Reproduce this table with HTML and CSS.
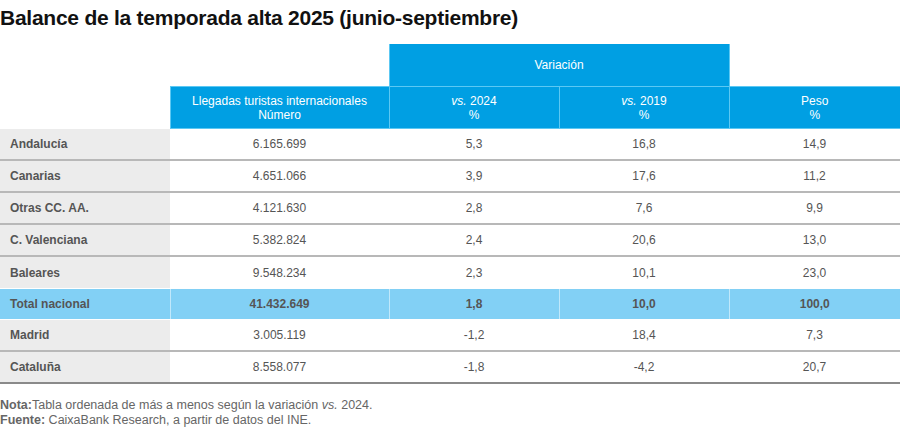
FILE: index.html
```html
<!DOCTYPE html>
<html lang="es">
<head>
<meta charset="utf-8">
<link rel="stylesheet" href="styles.css">
</head>
<body>
<h1 class="title">Balance de la temporada alta 2025 (junio-septiembre)</h1>
<table class="tbl">
  <colgroup>
    <col class="c-label"><col class="c-num"><col class="c-var"><col class="c-var"><col class="c-peso">
  </colgroup>
  <thead>
    <tr class="h1">
      <th></th><th></th><th colspan="2" class="blue">Variación</th><th></th>
    </tr>
    <tr class="h2">
      <th></th>
      <th class="blue">Llegadas turistas internacionales<br>Número</th>
      <th class="blue"><i>vs.</i> 2024<br>%</th>
      <th class="blue"><i>vs.</i> 2019<br>%</th>
      <th class="blue">Peso<br>%</th>
    </tr>
  </thead>
  <tbody>
    <tr><td class="lab">Andalucía</td><td>6.165.699</td><td>5,3</td><td>16,8</td><td>14,9</td></tr>
    <tr><td class="lab">Canarias</td><td>4.651.066</td><td>3,9</td><td>17,6</td><td>11,2</td></tr>
    <tr><td class="lab">Otras CC. AA.</td><td>4.121.630</td><td>2,8</td><td>7,6</td><td>9,9</td></tr>
    <tr><td class="lab">C. Valenciana</td><td>5.382.824</td><td>2,4</td><td>20,6</td><td>13,0</td></tr>
    <tr class="pre"><td class="lab">Baleares</td><td>9.548.234</td><td>2,3</td><td>10,1</td><td>23,0</td></tr>
    <tr class="total"><td class="lab">Total nacional</td><td>41.432.649</td><td>1,8</td><td>10,0</td><td>100,0</td></tr>
    <tr><td class="lab">Madrid</td><td>3.005.119</td><td>-1,2</td><td>18,4</td><td>7,3</td></tr>
    <tr class="last"><td class="lab">Cataluña</td><td>8.558.077</td><td>-1,8</td><td>-4,2</td><td>20,7</td></tr>
  </tbody>
</table>
<div class="notes">
  <p><b>Nota:</b>Tabla ordenada de más a menos según la variación <i>vs.</i> 2024.</p>
  <p><b>Fuente:</b> CaixaBank Research, a partir de datos del INE.</p>
</div>
</body>
</html>
```
FILE: styles.css
```css
html, body {
  margin: 0;
  padding: 0;
  background: #ffffff;
}
body {
  width: 900px;
  font-family: "Liberation Sans", Arial, sans-serif;
  color: #555555;
}
.title {
  margin: 0;
  height: 44px;
  padding-top: 6px;
  box-sizing: border-box;
  font-size: 21px;
  line-height: 24px;
  font-weight: bold;
  color: #111111;
  letter-spacing: -0.25px;
}
.tbl {
  width: 900px;
  border-collapse: collapse;
  table-layout: fixed;
  font-size: 12px;
}
.c-label { width: 170px; }
.c-num { width: 219px; }
.c-var { width: 170px; }
.c-peso { width: 171px; }
.tbl th {
  padding: 0;
  font-weight: normal;
  color: #ffffff;
  line-height: 14px;
  text-align: center;
}
.tbl th.blue {
  background: #009fe3;
  border: 1px solid #5cc8f3;
}
.tbl .h1 th { height: 42px; }
.tbl .h1 th.blue { border-top: 0; }
.tbl .h2 th { height: 41px; }
.tbl .h2 th.blue:last-child { border-right: 0; }
.tbl td {
  height: 30px;
  padding: 0;
  text-align: center;
  border-bottom: 2px solid #b8b8b8;
}
.tbl td.lab {
  text-align: left;
  padding-left: 10px;
  font-weight: bold;
  background: #ececec;
}
.tbl tr.pre td { border-bottom: 1px solid #ffffff; height: 31px; }
.tbl tr.total td {
  background: #82d0f5;
  font-weight: bold;
  border-bottom: 1px solid #ffffff;
  border-left: 1px solid #c0e8fb;
}
.tbl tr.total td:first-child { border-left: 0; }
.tbl tr.last td { border-bottom: 2px solid #8a8a8a; }
.notes {
  margin-top: 14px;
  font-size: 12.5px;
  line-height: 15px;
  color: #666666;
}
.notes p { margin: 0; }
.notes b { font-weight: bold; }
```
